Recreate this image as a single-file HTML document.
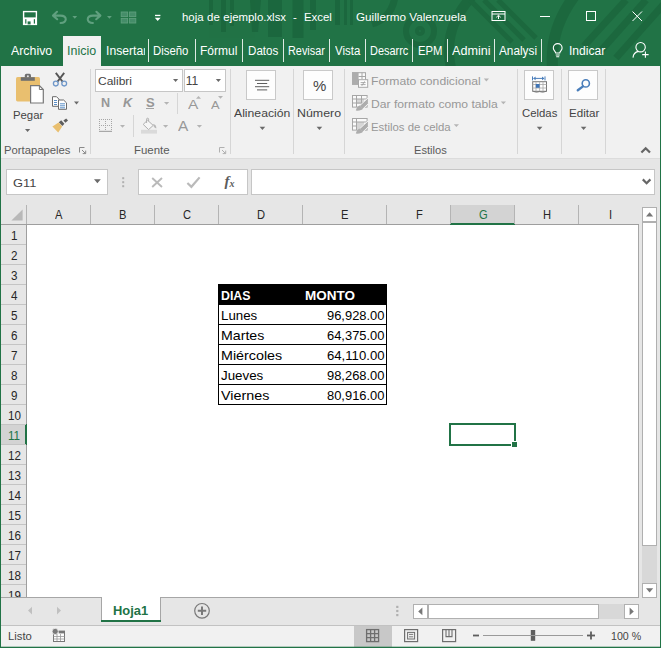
<!DOCTYPE html>
<html lang="es"><head><meta charset="utf-8"><title>hoja de ejemplo.xlsx - Excel</title>
<style>
html,body{margin:0;padding:0}
body{width:662px;height:648px;overflow:hidden;position:relative;background:#217346;font-family:"Liberation Sans",sans-serif}
.a{position:absolute}
.t{position:absolute;white-space:nowrap;line-height:1;transform-origin:0 0}
.bx{position:absolute;background:#fff;border:1px solid #c6c6c6;box-sizing:border-box}
.bb{position:absolute;background:#fdfdfd;border:1px solid #c9c9c9;box-sizing:border-box}
svg{position:absolute;left:0;top:0}
</style></head><body>
<div class="a" style="left:661px;top:0;width:1px;height:648px;background:#fbfdfc"></div>
<!-- ribbon -->
<div class="a" style="left:63px;top:36px;width:38px;height:31px;background:#f1f1f1"></div>
<div class="a" style="left:1px;top:66px;width:659px;height:92px;background:#f1f1f1"></div>
<!-- formula + workspace background -->
<div class="a" style="left:1px;top:158px;width:659px;height:468px;background:#e6e6e6"></div>
<div class="a" style="left:1px;top:158px;width:659px;height:1px;background:#dcdcdc"></div>
<!-- ribbon boxes -->
<div class="bx" style="left:95px;top:69px;width:88px;height:23px"></div>
<div class="bx" style="left:184px;top:69px;width:42px;height:23px"></div>
<div class="bb" style="left:246px;top:70px;width:30px;height:30px"></div>
<div class="bb" style="left:303px;top:70px;width:30px;height:30px"></div>
<div class="bb" style="left:524px;top:70px;width:30px;height:30px"></div>
<div class="bb" style="left:568px;top:70px;width:30px;height:30px"></div>
<!-- formula bar boxes -->
<div class="bx" style="left:6px;top:169px;width:102px;height:26px"></div>
<div class="bx" style="left:138px;top:169px;width:110px;height:26px"></div>
<div class="bx" style="left:251px;top:169px;width:404px;height:26px"></div>
<!-- sheet -->
<div class="a" style="left:27px;top:225px;width:612px;height:372px;background:#fff"></div>
<!-- column header selected -->
<div class="a" style="left:451px;top:205px;width:64px;height:19px;background:#d3d3d3"></div>
<div class="a" style="left:1px;top:224px;width:638px;height:1px;background:#9e9e9e"></div>
<div class="a" style="left:450px;top:223px;width:65px;height:2px;background:#217346"></div>
<!-- row header selected -->
<div class="a" style="left:1px;top:425px;width:25px;height:19px;background:#d3d3d3"></div>
<div class="a" style="left:26px;top:225px;width:1px;height:372px;background:#9e9e9e"></div>
<div class="a" style="left:25px;top:424px;width:2px;height:21px;background:#217346"></div>
<!-- sheet borders -->
<div class="a" style="left:638px;top:225px;width:1px;height:373px;background:#a6a6a6"></div>
<div class="a" style="left:1px;top:597px;width:638px;height:1px;background:#a6a6a6"></div>
<!-- data table -->
<div class="a" style="left:218px;top:284px;width:169px;height:21px;background:#000"></div>
<div class="a" style="left:218px;top:304px;width:169px;height:101px;box-sizing:border-box;border:1px solid #000;background:#fff"></div>
<div class="a" style="left:218px;top:324px;width:169px;height:1px;background:#000"></div>
<div class="a" style="left:218px;top:344px;width:169px;height:1px;background:#000"></div>
<div class="a" style="left:218px;top:364px;width:169px;height:1px;background:#000"></div>
<div class="a" style="left:218px;top:384px;width:169px;height:1px;background:#000"></div>
<!-- selection G11 -->
<div class="a" style="left:449px;top:423px;width:67px;height:23px;box-sizing:border-box;border:2px solid #217346"></div>
<div class="a" style="left:511px;top:441px;width:6px;height:6px;background:#fff"></div>
<div class="a" style="left:512px;top:442px;width:5px;height:5px;background:#217346"></div>
<!-- vertical scrollbar -->
<div class="a" style="left:642px;top:222px;width:15px;height:362px;background:#d8d8d8"></div>
<div class="bx" style="left:642px;top:207px;width:15px;height:15px;border-color:#b0b0b0"></div>
<div class="bx" style="left:642px;top:222px;width:15px;height:324px;border-color:#b0b0b0"></div>
<div class="bx" style="left:642px;top:583px;width:15px;height:15px;border-color:#b0b0b0"></div>
<!-- horizontal scrollbar -->
<div class="a" style="left:428px;top:604px;width:197px;height:15px;background:#d8d8d8"></div>
<div class="bx" style="left:413px;top:604px;width:15px;height:15px;border-color:#b0b0b0"></div>
<div class="bx" style="left:428px;top:604px;width:171px;height:15px;border-color:#b0b0b0"></div>
<div class="bx" style="left:624px;top:604px;width:15px;height:15px;border-color:#b0b0b0"></div>
<!-- sheet tab -->
<div class="a" style="left:101px;top:597px;width:60px;height:24px;background:#fff;border-left:1px solid #a6a6a6;border-right:1px solid #a6a6a6;box-sizing:border-box"></div>
<div class="a" style="left:101px;top:620px;width:60px;height:2px;background:#217346"></div>
<!-- status bar -->
<div class="a" style="left:1px;top:625px;width:659px;height:1px;background:#c2c2c2"></div>
<div class="a" style="left:1px;top:626px;width:659px;height:21px;background:#f1f1f1"></div>
<div class="a" style="left:354px;top:626px;width:38px;height:21px;background:#c8c8c8"></div>

<div class="a" style="left:1px;top:646px;width:659px;height:1px;background:rgba(33,115,70,0.3)"></div>
<svg width="662" height="648" viewBox="0 0 662 648">
<!-- title pattern -->
<clipPath id="tb"><path d="M0 0H661V66H101V36H63V66H0Z"/></clipPath>
<g fill="#1b663d" opacity="0.85" clip-path="url(#tb)">
<rect x="209" y="0" width="4" height="25"/><rect x="221" y="0" width="5" height="32"/><rect x="230" y="0" width="4" height="26"/>
<path d="M250 0H261L258 32H252Z"/><rect x="268" y="0" width="14" height="37"/><rect x="292.5" y="0" width="11" height="38"/>
<rect x="310" y="0" width="6" height="30"/><rect x="335" y="0" width="5" height="25"/><rect x="344" y="0" width="3" height="25"/><rect x="350" y="0" width="3" height="25"/>
</g>
<g fill="none" stroke="#1b663d" opacity="0.8" clip-path="url(#tb)">
<circle cx="420" cy="31" r="14" stroke-width="6"/>
<circle cx="420" cy="31" r="3" stroke-width="4"/>
<path d="M395 -4 Q392 18 372 24" stroke-width="7"/>
<path d="M474 -6 Q440 30 452 72" stroke-width="10"/>
<path d="M470 0 L512 42 M484 0 L524 40 M498 0 L536 38" stroke-width="5"/>
<path d="M576 -6 Q548 30 553 72" stroke-width="11"/>
<path d="M584 46 L626 0 M598 54 L646 0 M616 58 L664 4" stroke-width="7"/>
</g>
<!-- QAT save -->
<g>
<rect x="23.6" y="11.6" width="12.8" height="12.8" fill="none" stroke="#fff" stroke-width="1.4"/>
<rect x="24" y="17.4" width="12" height="7" fill="#fff"/>
<rect x="25.2" y="19.2" width="1.2" height="4.4" fill="#217346"/>
<rect x="33.8" y="19.2" width="1.2" height="4.4" fill="#217346"/>
<rect x="27.6" y="21.4" width="3" height="3" fill="#217346"/>
</g>
<!-- undo / redo (disabled) -->
<g fill="none" stroke="#60a07f" stroke-width="2.1" stroke-linejoin="round" stroke-linecap="round">
<path d="M57 11.8 L53 15.6 L57.2 19.2 M53.6 15.6 H60.5 C67.5 15.6 67.5 23 60.6 23"/>
<path d="M96.4 11.8 L100.4 15.6 L96.2 19.2 M99.8 15.6 H93 C86 15.6 86 23 92.9 23"/>
</g>
<g fill="#60a07f">
<path d="M72.4 16 H77.2 L74.8 18.8 Z"/>
<path d="M107 16 H111.8 L109.4 18.8 Z"/>
</g>
<g fill="#458d69" stroke="#5e9f7d" stroke-width="0.9">
<rect x="121.2" y="12" width="6.4" height="4.6"/><rect x="129.4" y="12" width="6.4" height="4.6"/>
<rect x="121.2" y="18.4" width="6.4" height="4.6"/><rect x="129.4" y="18.4" width="6.4" height="4.6"/>
</g>
<g fill="#fff">
<rect x="155" y="14.8" width="5.4" height="1.3"/>
<path d="M154.8 17.7 H160.6 L157.7 21 Z"/>
</g>
<!-- window controls -->
<g fill="none" stroke="#fff" stroke-width="1">
<rect x="492" y="11.5" width="13" height="9"/>
<path d="M492 14 H505 M498.5 19 V15.5 M496.3 17.3 L498.5 15.2 L500.7 17.3"/>
<path d="M540 16.5 H550"/>
<rect x="586.5" y="11.5" width="9" height="9"/>
<path d="M632.5 11.5 L642 21 M642 11.5 L632.5 21"/>
</g>
<!-- tab separators -->
<g fill="#fff" opacity="0.85">
<rect x="148" y="39" width="1" height="23"/><rect x="195" y="39" width="1" height="23"/><rect x="242" y="39" width="1" height="23"/>
<rect x="283" y="39" width="1" height="23"/><rect x="329" y="39" width="1" height="23"/><rect x="365" y="39" width="1" height="23"/>
<rect x="412" y="39" width="1" height="23"/><rect x="447" y="39" width="1" height="23"/><rect x="494" y="39" width="1" height="23"/>
<rect x="541" y="39" width="1" height="23"/>
</g>
<!-- lightbulb + person -->
<g fill="none" stroke="#fff" stroke-width="1.1">
<path d="M555.7 53 C555.7 51.4 553.3 50.6 553.3 48 A4.4 4.4 0 0 1 562.1 48 C562.1 50.6 559.7 51.4 559.7 53 Z"/>
<path d="M555.7 55 H559.7 M556.2 56.8 H559.2"/>
<circle cx="640.6" cy="47.2" r="4.7"/>
<path d="M633 57.6 C633.3 54 635.6 52 638.4 51.4"/>
<path d="M642.2 54.6 H648.6 M645.4 51.4 V57.8"/>
</g>
<!-- ribbon group separators -->
<g fill="#d6d6d6">
<rect x="90" y="69" width="1" height="85"/><rect x="230" y="69" width="1" height="85"/><rect x="293" y="69" width="1" height="85"/>
<rect x="344" y="69" width="1" height="85"/><rect x="517" y="69" width="1" height="85"/><rect x="561" y="69" width="1" height="85"/>
<rect x="605" y="69" width="1" height="85"/>
<rect x="177" y="93" width="1" height="21"/><rect x="133" y="115" width="1" height="22"/>
</g>
<!-- paste -->
<g>
<rect x="16" y="77" width="24" height="24.4" rx="1.6" fill="#e9bf6f"/>
<rect x="20.8" y="77.2" width="14" height="3.6" fill="#6f6f6f"/>
<path d="M24.8 77.6 V75.4 Q24.8 73.8 26.4 73.8 H29.4 Q31 73.8 31 75.4 V77.6 Z" fill="#6f6f6f"/>
<circle cx="27.9" cy="76.3" r="1" fill="#e6e6e6"/>
<path d="M30.6 85.6 H39.4 L43.3 89.5 V103 H30.6 Z" fill="#fff" stroke="#777" stroke-width="1.2"/>
<path d="M39.4 85.6 V89.5 H43.3" fill="none" stroke="#777" stroke-width="1"/>
</g>
<!-- scissors -->
<g fill="none">
<path d="M55.8 72.8 L62.8 82 M64.2 72.8 L57.2 82" stroke="#555" stroke-width="1.9"/>
<circle cx="55.8" cy="83.6" r="2.4" stroke="#6f97c9" stroke-width="1.3"/>
<circle cx="64.2" cy="83.6" r="2.4" stroke="#6f97c9" stroke-width="1.3"/>
</g>
<!-- copy -->
<g fill="#fff" stroke="#6b6b6b" stroke-width="1">
<path d="M52.5 96.7 H56.5 L59 99.2 V106.3 H52.5 Z"/>
<path d="M58.5 100 H63.6 L66.5 102.9 V109.3 H58.5 Z"/>
</g>
<g fill="#5b8fc7">
<rect x="54" y="100" width="3" height="1"/><rect x="54" y="102" width="3" height="1"/><rect x="54" y="104" width="3" height="1"/>
<rect x="60" y="103.3" width="5" height="1"/><rect x="60" y="105.3" width="5" height="1"/><rect x="60" y="107.3" width="5" height="1"/>
</g>
<!-- format painter -->
<g>
<path d="M52.4 126.6 L58.6 122.6 L62.2 126.6 L58.2 132.4 Z" fill="#e9bf6f"/>
<path d="M58.8 122.2 L61.2 120.2 L64.4 123.8 L62.4 126 Z" fill="#5e5e5e"/>
<path d="M63.4 120.6 L66.2 118.4 L68 120.4 L65.4 122.8 Z" fill="#5e5e5e"/>
</g>
<!-- dropdown arrows dark -->
<g fill="#6a6a6a">
<path d="M25 129 H30.2 L27.6 132 Z"/>
<path d="M74 101.6 H79 L76.5 104.4 Z"/>
<path d="M173 79 H178.2 L175.6 82 Z"/>
<path d="M215.8 79 H221 L218.4 82 Z"/>
<path d="M259.6 126.8 H265.2 L262.4 130 Z"/>
<path d="M316.6 126.8 H322.2 L319.4 130 Z"/>
<path d="M536.8 126.8 H542.4 L539.6 130 Z"/>
<path d="M580.8 126.8 H586.4 L583.6 130 Z"/>
<path d="M94 179.2 H100.8 L97.4 183.2 Z"/>
</g>
<!-- disabled arrows -->
<g fill="#b4b4b4">
<path d="M164 102 H169.2 L166.6 104.8 Z"/>
<path d="M120 125 H125 L122.5 127.8 Z"/>
<path d="M163 125 H168.2 L165.6 127.8 Z"/>
<path d="M196.8 125 H202 L199.4 127.8 Z"/>
<path d="M483.8 78.6 H489 L486.4 81.4 Z"/>
<path d="M500.8 101.4 H506 L503.4 104.2 Z"/>
<path d="M453.8 124.2 H459 L456.4 127 Z"/>
<path d="M196 98.8 H201 L198.5 96 Z"/>
<path d="M218 96 H223 L220.5 98.8 Z"/>
</g>
<!-- underline S -->
<rect x="146" y="108" width="8" height="1" fill="#a3a3a3"/>
<!-- border icon -->
<g stroke="#a6a6a6" stroke-width="1" fill="none" stroke-dasharray="1 1" shape-rendering="crispEdges">
<path d="M99 119.5 H112 M99 125.5 H112 M99.5 119 V131 M105.5 119 V131 M111.5 119 V131"/>
</g>
<rect x="99" y="130.8" width="13" height="1.2" fill="#a8a8a8"/>
<!-- fill bucket -->
<g>
<rect x="141" y="129.8" width="16" height="3.8" fill="#dadada"/>
<path d="M147.5 120.2 L153.2 125.4 L148.6 129.6 L143.2 124.4 Z" fill="#f6f6f6" stroke="#b0b0b0" stroke-width="1"/>
<path d="M146.6 123 V119.2 Q146.6 118.2 147.6 118.2 Q148.6 118.2 148.6 119.2 V121.2" fill="none" stroke="#b0b0b0" stroke-width="1"/>
<path d="M153 124 Q156.4 124.4 156.4 128.6 Q153.8 128 153 124 Z" fill="#b8b8b8"/>
</g>
<!-- launchers -->
<g fill="none" stroke="#8a8a8a" stroke-width="1">
<path d="M79.5 152.5 V147.5 H84.5"/><path d="M82 150 L85.5 153.5 M85.7 150.6 V153.6 H82.7"/>
</g>
<g fill="none" stroke="#b0b0b0" stroke-width="1">
<path d="M219.5 152.5 V147.5 H224.5"/><path d="M222 150 L225.5 153.5 M225.7 150.6 V153.6 H222.7"/>
</g>
<!-- align icon -->
<g fill="#5e5e5e">
<rect x="255" y="79.8" width="14.2" height="1"/><rect x="257" y="83" width="10.2" height="1"/>
<rect x="255" y="86.2" width="14.2" height="1"/><rect x="257" y="89.4" width="10.2" height="1"/>
</g>
<!-- styles icons (disabled) -->
<g>
<rect x="352.5" y="72.7" width="13" height="11.6" fill="#fafafa" stroke="#a6a6a6"/>
<rect x="352" y="72.2" width="6.6" height="12.4" fill="#adadad"/>
<path d="M358.5 76.5 H365.5 M362 72.5 V79" stroke="#a6a6a6" fill="none"/>
<rect x="358.5" y="79.7" width="9.2" height="7.6" fill="#fdfdfd" stroke="#a8a8a8"/>
<path d="M360.6 82.6 H365.6 M360.6 84.6 H365.6 M364.6 81.4 L361.8 85.8" stroke="#a0a0a0" stroke-width="0.9" fill="none"/>

<rect x="352.5" y="95.5" width="14.6" height="11.6" fill="#fafafa" stroke="#a6a6a6"/>
<rect x="356" y="99" width="8" height="5" fill="#d6d6d6"/>
<path d="M352.5 99 H367 M352.5 103 H367 M356.5 95.5 V107 M361.5 95.5 V107" stroke="#a6a6a6" fill="none"/>
<path d="M368.4 97.6 L359.6 105.8 L362.8 109 L368.4 103.6 Z" fill="#adadad" stroke="#f4f4f4" stroke-width="1"/>
<path d="M360 105.6 Q357 106 355.8 110.6 Q361.6 111 363 108.6 Z" fill="#adadad"/>

<rect x="352.5" y="118.5" width="14.6" height="11.6" fill="#fafafa" stroke="#a6a6a6"/>
<rect x="356" y="122" width="8" height="8" fill="#d6d6d6"/>
<path d="M352.5 122 H367 M352.5 126 H356 M356.5 118.5 V130" stroke="#a6a6a6" fill="none"/>
<path d="M368.4 120.6 L359.6 128.8 L362.8 132 L368.4 126.6 Z" fill="#adadad" stroke="#f4f4f4" stroke-width="1"/>
<path d="M360 128.6 Q357 129 355.8 133.6 Q361.6 134 363 131.6 Z" fill="#adadad"/>
</g>
<!-- cells icon -->
<g>
<path d="M532.5 76.4 V80.4 M545 76.4 V80.4 M533.6 78.4 H544" stroke="#4a7ebb" stroke-width="1" fill="none"/>
<path d="M533.2 78.4 L535.6 76.6 V80.2 Z M544.4 78.4 L542 76.6 V80.2 Z" fill="#4a7ebb"/>
<rect x="532.7" y="81.7" width="13.8" height="9.6" fill="#fff" stroke="#777" stroke-width="1"/>
<path d="M532.7 84.5 H546.5 M532.7 88 H546.5 M536 81.7 V91.3 M539.6 81.7 V91.3 M543 81.7 V91.3" stroke="#a8a8a8" stroke-width="0.8" fill="none"/>
<rect x="535.8" y="84" width="3.8" height="3.8" fill="#3f74b5"/>
<path d="M533.4 91.4 Q536.4 92.8 539.6 91.6 Q542.8 92.8 546 91.4" stroke="#777" stroke-width="1" fill="none"/>
</g>
<!-- magnifier -->
<g fill="none" stroke="#4a7ebb">
<circle cx="585.8" cy="83.4" r="3.6" stroke-width="1.6"/>
<path d="M583 86.4 L577.8 90.2" stroke-width="2.4" stroke-linecap="round"/>
</g>
<!-- collapse caret -->
<path d="M641.4 152.6 L645.7 148.2 L650 152.6" fill="none" stroke="#666" stroke-width="2.2"/>
<!-- formula bar icons -->
<g fill="#b0b0b0">
<rect x="122.2" y="177.2" width="2" height="2"/><rect x="122.2" y="181.2" width="2" height="2"/><rect x="122.2" y="185.2" width="2" height="2"/>
</g>
<g fill="none" stroke="#bababa" stroke-width="1.9">
<path d="M152.2 178 L162 187 M162 178 L152.2 187"/>
<path d="M187.4 183 L191.4 186.8 L199.6 177.4" stroke-width="2.2"/>
</g>
<path d="M642.8 179.4 L646.6 183.2 L650.4 179.4" fill="none" stroke="#666" stroke-width="2.2"/>
<!-- select-all triangle -->
<path d="M22.6 209.4 V220.6 H11.4 Z" fill="#b8b8b8"/>
<!-- column separators -->
<g fill="#b4b4b4">
<rect x="26" y="205" width="1" height="19"/><rect x="90" y="205" width="1" height="19"/><rect x="154" y="205" width="1" height="19"/><rect x="218" y="205" width="1" height="19"/>
<rect x="302" y="205" width="1" height="19"/><rect x="386" y="205" width="1" height="19"/><rect x="450" y="205" width="1" height="19"/>
<rect x="514" y="205" width="1" height="19"/><rect x="578" y="205" width="1" height="19"/>
</g>
<!-- row separators -->
<g fill="#c4c4c4">
<rect x="1" y="244" width="25" height="1"/><rect x="1" y="264" width="25" height="1"/><rect x="1" y="284" width="25" height="1"/><rect x="1" y="304" width="25" height="1"/><rect x="1" y="324" width="25" height="1"/><rect x="1" y="344" width="25" height="1"/><rect x="1" y="364" width="25" height="1"/><rect x="1" y="384" width="25" height="1"/><rect x="1" y="404" width="25" height="1"/><rect x="1" y="424" width="25" height="1"/><rect x="1" y="444" width="25" height="1"/><rect x="1" y="464" width="25" height="1"/><rect x="1" y="484" width="25" height="1"/><rect x="1" y="504" width="25" height="1"/><rect x="1" y="524" width="25" height="1"/><rect x="1" y="544" width="25" height="1"/><rect x="1" y="564" width="25" height="1"/><rect x="1" y="584" width="25" height="1"/>
</g>
<!-- scrollbar arrows -->
<g fill="#777">
<path d="M646 216.4 H653.2 L649.6 212.2 Z"/>
<path d="M646 588.2 H653.2 L649.6 592.4 Z"/>
<path d="M422.4 607.6 V615.2 L418.2 611.4 Z"/>
<path d="M629.6 607.6 V615.2 L633.8 611.4 Z"/>
</g>
<g fill="#c0c0c0">
<path d="M32 606.8 V614.4 L28 610.6 Z"/>
<path d="M57 606.8 V614.4 L61 610.6 Z"/>
</g>
<g fill="#b0b0b0">
<rect x="396.2" y="605.8" width="2.2" height="2.2"/><rect x="396.2" y="609.9" width="2.2" height="2.2"/><rect x="396.2" y="614" width="2.2" height="2.2"/>
</g>
<!-- new sheet -->
<g fill="none" stroke="#7a7a7a">
<circle cx="202" cy="610.8" r="7.3" stroke-width="1.2"/>
<path d="M197.8 610.8 H206.2 M202 606.6 V615" stroke-width="2"/>
</g>
<!-- status: macro icon -->
<g>
<rect x="53.5" y="631.5" width="11" height="10" fill="#fdfdfd" stroke="#777"/>
<rect x="58.6" y="630.6" width="6.4" height="2.8" fill="#777"/>
<circle cx="55.2" cy="631.4" r="3.1" fill="#7a7a7a" stroke="#f1f1f1" stroke-width="0.8"/>
<path d="M53.5 636.5 H64.5 M53.5 639 H64.5 M57 634 V641 M60.5 634 V641" stroke="#999" stroke-width="0.8" fill="none"/>
</g>
<!-- view buttons -->
<g fill="none" stroke="#6e6e6e" stroke-width="1.3">
<rect x="366.6" y="629.6" width="12" height="12"/>
<path d="M370.6 629.6 V641.6 M374.6 629.6 V641.6 M366.6 633.6 H378.6 M366.6 637.6 H378.6"/>
</g>
<g fill="none" stroke="#6e6e6e">
<rect x="404.6" y="629.6" width="13" height="12" stroke-width="1.2"/>
<rect x="407.6" y="632.4" width="7" height="6.6" stroke-width="1"/>
<path d="M409 634.4 H413.2 M409 636.8 H413.2" stroke-width="0.9"/>
<rect x="442.6" y="629.6" width="13" height="12" stroke-width="1.2"/>
<path d="M446 629.6 V636.6 H452 V629.6 M449 629.6 V636.6" stroke-width="1.1"/>
</g>
<!-- zoom slider -->
<g fill="#5e5e5e">
<rect x="473" y="634.6" width="6" height="1.8"/>
<rect x="587" y="634.6" width="8" height="1.8"/><rect x="590.1" y="631.5" width="1.8" height="8"/>
<rect x="530.8" y="630" width="4.4" height="10.8"/>
</g>
<rect x="483" y="635" width="100" height="1" fill="#9a9a9a"/>

</svg>
<span class="t" style="left:182.10px;top:11px;font-size:11.6px;color:#fff;white-space:pre;word-spacing:0.35px;transform:scaleX(0.9839);">hoja de ejemplo.xlsx  -  Excel</span>
<span class="t" style="left:355.90px;top:11px;font-size:11.6px;color:#fff;transform:scaleX(1.0087);">Guillermo Valenzuela</span>
<span class="t" style="left:10.90px;top:45px;font-size:12.5px;color:#fff;transform:scaleX(0.9883);">Archivo</span>
<span class="t" style="left:67.10px;top:45px;font-size:12.5px;color:#217346;transform:scaleX(0.9970);">Inicio</span>
<div class="a" style="left:101px;top:36px;width:43.599999999999994px;height:30px;overflow:hidden"><span class="t" style="left:5.30px;top:9px;font-size:12.5px;color:#fff;transform:scaleX(0.9743);">Insertar</span></div>
<span class="t" style="left:153.30px;top:45px;font-size:12.5px;color:#fff;transform:scaleX(0.9095);">Diseño</span>
<span class="t" style="left:200.10px;top:45px;font-size:12.5px;color:#fff;transform:scaleX(0.9639);">Fórmul</span>
<span class="t" style="left:247.90px;top:45px;font-size:12.5px;color:#fff;transform:scaleX(0.9278);">Datos</span>
<span class="t" style="left:288.30px;top:45px;font-size:12.5px;color:#fff;transform:scaleX(0.8684);">Revisar</span>
<span class="t" style="left:335.10px;top:45px;font-size:12.5px;color:#fff;transform:scaleX(0.9174);">Vista</span>
<span class="t" style="left:370.10px;top:45px;font-size:12.5px;color:#fff;transform:scaleX(0.8751);">Desarrc</span>
<span class="t" style="left:417.90px;top:45px;font-size:12.5px;color:#fff;transform:scaleX(0.9043);">EPM</span>
<span class="t" style="left:451.80px;top:45px;font-size:12.5px;color:#fff;transform:scaleX(1.0100);">Admini</span>
<span class="t" style="left:499.10px;top:45px;font-size:12.5px;color:#fff;transform:scaleX(0.9430);">Analysi</span>
<span class="t" style="left:569.10px;top:45px;font-size:12.5px;color:#fff;transform:scaleX(0.9672);">Indicar</span>
<span class="t" style="left:13.20px;top:109px;font-size:11.6px;color:#444444;transform:scaleX(0.9762);">Pegar</span>
<span class="t" style="left:4.30px;top:145px;font-size:11.5px;color:#5a5a5a;transform:scaleX(0.9796);">Portapapeles</span>
<span class="t" style="left:98.10px;top:75px;font-size:11.6px;color:#444444;transform:scaleX(1.0347);">Calibri</span>
<span class="t" style="left:185.80px;top:75px;font-size:12px;color:#444444;">11</span>
<span class="t" style="left:101.30px;top:97px;font-size:12px;color:#979797;font-weight:bold;transform:scaleX(1.0494);">N</span>
<span class="t" style="left:122.90px;top:97px;font-size:12px;color:#979797;font-weight:bold;font-style:italic;transform:scaleX(1.0609);">K</span>
<span class="t" style="left:145.90px;top:97px;font-size:12px;color:#979797;font-weight:bold;transform:scaleX(1.0854);">S</span>
<span class="t" style="left:134.30px;top:145px;font-size:11.5px;color:#5a5a5a;transform:scaleX(0.9941);">Fuente</span>
<span class="t" style="left:233.80px;top:107px;font-size:11.6px;color:#444444;transform:scaleX(1.0523);">Alineación</span>
<span class="t" style="left:312.90px;top:78px;font-size:15px;color:#444444;transform:scaleX(0.9967);">%</span>
<span class="t" style="left:297.10px;top:107px;font-size:11.6px;color:#444444;transform:scaleX(1.0691);">Número</span>
<span class="t" style="left:371.20px;top:75px;font-size:11.6px;color:#989898;transform:scaleX(1.0507);">Formato condicional</span>
<span class="t" style="left:371.20px;top:98px;font-size:11.6px;color:#989898;transform:scaleX(1.0459);">Dar formato como tabla</span>
<span class="t" style="left:371.20px;top:121px;font-size:11.6px;color:#989898;transform:scaleX(0.9815);">Estilos de celda</span>
<span class="t" style="left:414.30px;top:145px;font-size:11.5px;color:#5a5a5a;transform:scaleX(0.9683);">Estilos</span>
<span class="t" style="left:522.10px;top:107px;font-size:11.6px;color:#444444;transform:scaleX(0.9780);">Celdas</span>
<span class="t" style="left:569.10px;top:107px;font-size:11.6px;color:#444444;transform:scaleX(1.0001);">Editar</span>
<span class="t" style="left:187.60px;top:99px;font-size:12.6px;color:#989898;transform:scaleX(1.2253);">A</span>
<span class="t" style="left:210.60px;top:101px;font-size:10px;color:#989898;transform:scaleX(1.2890);">A</span>
<span class="t" style="left:178.10px;top:119px;font-size:14px;color:#989898;transform:scaleX(1.1023);">A</span>
<span class="t" style="left:224.60px;top:174px;font-size:15px;color:#5c5c5c;font-family:'Liberation Serif',serif;font-style:italic;font-weight:bold;">f</span>
<span class="t" style="left:229.60px;top:179px;font-size:10px;color:#5c5c5c;font-family:'Liberation Serif',serif;font-style:italic;font-weight:bold;">x</span>
<span class="t" style="left:12.90px;top:177px;font-size:11.6px;color:#444444;transform:scaleX(1.1062);">G11</span>
<span class="t" style="left:55.27px;top:209px;font-size:12px;color:#262626;transform:scaleX(0.9300);">A</span>
<span class="t" style="left:119.27px;top:209px;font-size:12px;color:#262626;transform:scaleX(0.9300);">B</span>
<span class="t" style="left:182.97px;top:209px;font-size:12px;color:#262626;transform:scaleX(0.9300);">C</span>
<span class="t" style="left:256.97px;top:209px;font-size:12px;color:#262626;transform:scaleX(0.9300);">D</span>
<span class="t" style="left:341.27px;top:209px;font-size:12px;color:#262626;transform:scaleX(0.9300);">E</span>
<span class="t" style="left:415.59px;top:209px;font-size:12px;color:#262626;transform:scaleX(0.9300);">F</span>
<span class="t" style="left:478.66px;top:209px;font-size:12px;color:#217346;transform:scaleX(0.9300);">G</span>
<span class="t" style="left:542.97px;top:209px;font-size:12px;color:#262626;transform:scaleX(0.9300);">H</span>
<span class="t" style="left:609.45px;top:209px;font-size:12px;color:#262626;transform:scaleX(0.9300);">I</span>
<span class="t" style="left:11.16px;top:230px;font-size:12px;color:#262626;transform:scaleX(0.9700);">1</span>
<span class="t" style="left:11.16px;top:250px;font-size:12px;color:#262626;transform:scaleX(0.9700);">2</span>
<span class="t" style="left:11.16px;top:270px;font-size:12px;color:#262626;transform:scaleX(0.9700);">3</span>
<span class="t" style="left:11.16px;top:290px;font-size:12px;color:#262626;transform:scaleX(0.9700);">4</span>
<span class="t" style="left:11.16px;top:310px;font-size:12px;color:#262626;transform:scaleX(0.9700);">5</span>
<span class="t" style="left:11.16px;top:330px;font-size:12px;color:#262626;transform:scaleX(0.9700);">6</span>
<span class="t" style="left:11.16px;top:350px;font-size:12px;color:#262626;transform:scaleX(0.9700);">7</span>
<span class="t" style="left:11.16px;top:370px;font-size:12px;color:#262626;transform:scaleX(0.9700);">8</span>
<span class="t" style="left:11.16px;top:390px;font-size:12px;color:#262626;transform:scaleX(0.9700);">9</span>
<span class="t" style="left:7.92px;top:410px;font-size:12px;color:#262626;transform:scaleX(0.9700);">10</span>
<span class="t" style="left:8.35px;top:430px;font-size:12px;color:#217346;transform:scaleX(0.9700);">11</span>
<span class="t" style="left:7.92px;top:450px;font-size:12px;color:#262626;transform:scaleX(0.9700);">12</span>
<span class="t" style="left:7.92px;top:470px;font-size:12px;color:#262626;transform:scaleX(0.9700);">13</span>
<span class="t" style="left:7.92px;top:490px;font-size:12px;color:#262626;transform:scaleX(0.9700);">14</span>
<span class="t" style="left:7.92px;top:510px;font-size:12px;color:#262626;transform:scaleX(0.9700);">15</span>
<span class="t" style="left:7.92px;top:530px;font-size:12px;color:#262626;transform:scaleX(0.9700);">16</span>
<span class="t" style="left:7.92px;top:550px;font-size:12px;color:#262626;transform:scaleX(0.9700);">17</span>
<span class="t" style="left:7.92px;top:570px;font-size:12px;color:#262626;transform:scaleX(0.9700);">18</span>
<div class="a" style="left:1px;top:585px;width:25px;height:12px;overflow:hidden"><span class="t" style="left:6.92px;top:5px;font-size:12px;color:#262626;transform:scaleX(0.9700);">19</span></div>
<span class="t" style="left:220.90px;top:289px;font-size:13px;color:#fff;font-weight:bold;transform:scaleX(0.9497);">DIAS</span>
<span class="t" style="left:305.10px;top:289px;font-size:13px;color:#fff;font-weight:bold;transform:scaleX(1.0383);">MONTO</span>
<span class="t" style="left:220.90px;top:309px;font-size:13px;color:#000;transform:scaleX(1.0220);">Lunes</span>
<span class="t" style="left:326.60px;top:309px;font-size:13px;color:#000;transform:scaleX(0.9941);">96,928.00</span>
<span class="t" style="left:220.90px;top:329px;font-size:13px;color:#000;transform:scaleX(1.0897);">Martes</span>
<span class="t" style="left:326.60px;top:329px;font-size:13px;color:#000;transform:scaleX(0.9941);">64,375.00</span>
<span class="t" style="left:220.90px;top:349px;font-size:13px;color:#000;transform:scaleX(1.1002);">Miércoles</span>
<span class="t" style="left:326.60px;top:349px;font-size:13px;color:#000;transform:scaleX(1.0110);">64,110.00</span>
<span class="t" style="left:220.90px;top:369px;font-size:13px;color:#000;transform:scaleX(1.0266);">Jueves</span>
<span class="t" style="left:326.60px;top:369px;font-size:13px;color:#000;transform:scaleX(0.9941);">98,268.00</span>
<span class="t" style="left:220.90px;top:389px;font-size:13px;color:#000;transform:scaleX(1.1016);">Viernes</span>
<span class="t" style="left:326.60px;top:389px;font-size:13px;color:#000;transform:scaleX(0.9941);">80,916.00</span>
<span class="t" style="left:113.30px;top:605px;font-size:12.5px;color:#217346;font-weight:bold;transform:scaleX(1.0309);">Hoja1</span>
<span class="t" style="left:7.90px;top:630px;font-size:11.6px;color:#444444;transform:scaleX(0.9714);">Listo</span>
<span class="t" style="left:610.80px;top:631px;font-size:11.5px;color:#444444;transform:scaleX(0.9261);">100 %</span>
</body></html>
